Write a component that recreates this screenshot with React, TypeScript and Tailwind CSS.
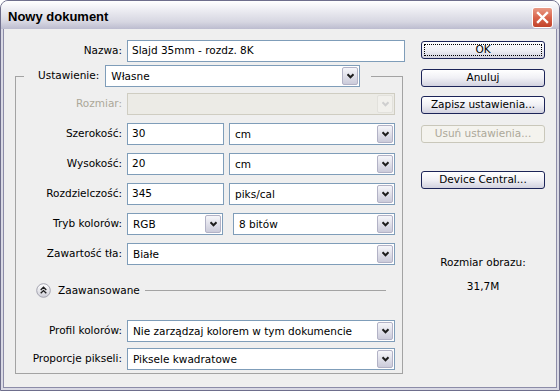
import React from "react";

// small chevron used on every combo box
function Arrow({ disabled }: { disabled?: boolean }) {
    return (
        <span
            className={`m-px w-[16px] shrink-0 rounded-[2px] border flex items-center justify-center ${
                disabled
                    ? "border-[#e2e1dc] bg-[#f1f0ec]"
                    : "border-[#b2b2c6] bg-gradient-to-b from-[#f6f6fa] to-[#cbcbda]"
            }`}
        >
            <svg width="9" height="6" viewBox="0 0 9 6">
                <path
                    d="M1.5 1.3L4.5 4.3L7.5 1.3"
                    fill="none"
                    stroke={disabled ? "#cfcfcf" : "#1e1e1e"}
                    strokeWidth="2"
                />
            </svg>
        </span>
    );
}

function Select({ value, w, disabled }: { value?: string; w: string; disabled?: boolean }) {
    return (
        <div
            className={`flex h-[22px] shrink-0 border ${w} ${
                disabled ? "border-[#cfcdc2] bg-[#ecebe6]" : "border-[#7f9db9] bg-white"
            }`}
        >
            <span className="flex-1 pl-[5px] pt-[1px] flex items-center whitespace-nowrap overflow-hidden">
                {value}
            </span>
            <Arrow disabled={disabled} />
        </div>
    );
}

function Input({ value, w }: { value: string; w: string }) {
    return (
        <div className={`flex h-[22px] shrink-0 items-center border border-[#7f9db9] bg-white pl-[4px] ${w}`}>
            {value}
        </div>
    );
}

function Row({ label, disabled, children }: { label: string; disabled?: boolean; children: React.ReactNode }) {
    return (
        <div className="flex items-center">
            <span className={`w-[111px] shrink-0 pr-[5px] text-right ${disabled ? "text-[#aca899]" : ""}`}>
                {label}
            </span>
            {children}
        </div>
    );
}

function Btn({ label, primary, disabled }: { label: string; primary?: boolean; disabled?: boolean }) {
    if (disabled) {
        return (
            <div className="flex h-[18px] items-center justify-center rounded-[3px] border border-[#c9c7ba] bg-[#f4f3ee] text-[#aca899]">
                {label}
            </div>
        );
    }
    return (
        <div className="flex h-[18px] rounded-[3px] border border-[#1c2458] bg-gradient-to-b from-[#ffffff] via-[#f0f0f5] to-[#d2d2df] p-[2px]">
            <span
                className={`flex flex-1 items-center justify-center ${
                    primary ? "border border-dotted border-black" : ""
                }`}
            >
                {label}
            </span>
        </div>
    );
}

export default function App() {
    return (
        <div className="w-[560px] h-[391px] flex flex-col overflow-hidden rounded-t-[8px] border border-[#6e6e8c] bg-[#d9d9e4] font-['DejaVu_Sans',sans-serif] text-[10.5px] text-black">
            {/* Title bar */}
            <div className="flex h-[28px] shrink-0 items-center justify-between pt-[4px] pl-[7px] pr-[6px] bg-[linear-gradient(to_bottom,#ffffff_0%,#ebebf1_35%,#d6d6e1_75%,#bcbccf_100%)]">
                <span className="font-['Liberation_Sans',sans-serif] text-[13px] font-bold">Nowy dokument</span>
                <div className="flex h-[21px] w-[21px] items-center justify-center rounded-[3px] border border-white bg-gradient-to-b from-[#e89a86] via-[#d9634b] to-[#c1432b]">
                    <svg width="13" height="13" viewBox="0 0 13 13">
                        <path d="M2 2L11 11M11 2L2 11" stroke="white" strokeWidth="2.4" strokeLinecap="square" />
                    </svg>
                </div>
            </div>

            {/* Frame + body */}
            <div className="flex flex-1 px-[2px] pb-[2px]">
                <div className="flex flex-1 border-x border-b border-[#8c8ca8] bg-[#efefef] pl-[11px] pt-[11px]">
                    {/* Left column */}
                    <div className="flex w-[390px] flex-col">
                        <div className="flex items-center">
                            <span className="w-[112px] shrink-0 pr-[5px] text-right">Nazwa:</span>
                            <Input value="Slajd 35mm - rozdz. 8K" w="w-[278px]" />
                        </div>

                        <fieldset className="mt-[3px] w-[388px] border border-[#a3a3a3] pb-[3px]">
                            <legend className="ml-[8px] pl-[14px] pr-[11px]">
                                <div className="flex items-center">
                                    <span>Ustawienie:</span>
                                    <div className="ml-[6px]">
                                        <Select value="Własne" w="w-[255px]" />
                                    </div>
                                </div>
                            </legend>

                            <div className="flex flex-col gap-[8px] pt-[6px]">
                                <Row label="Rozmiar:" disabled>
                                    <Select w="w-[268px]" disabled />
                                </Row>
                                <Row label="Szerokość:">
                                    <Input value="30" w="w-[97px]" />
                                    <div className="ml-[5px]">
                                        <Select value="cm" w="w-[166px]" />
                                    </div>
                                </Row>
                                <Row label="Wysokość:">
                                    <Input value="20" w="w-[97px]" />
                                    <div className="ml-[5px]">
                                        <Select value="cm" w="w-[166px]" />
                                    </div>
                                </Row>
                                <Row label="Rozdzielczość:">
                                    <Input value="345" w="w-[97px]" />
                                    <div className="ml-[5px]">
                                        <Select value="piks/cal" w="w-[166px]" />
                                    </div>
                                </Row>
                                <Row label="Tryb kolorów:">
                                    <Select value="RGB" w="w-[96px]" />
                                    <div className="ml-[10px]">
                                        <Select value="8 bitów" w="w-[162px]" />
                                    </div>
                                </Row>
                                <Row label="Zawartość tła:">
                                    <Select value="Białe" w="w-[268px]" />
                                </Row>
                            </div>

                            {/* Advanced toggle */}
                            <div className="mt-[18px] flex h-[15px] items-center pl-[20px] pr-[16px]">
                                <svg width="15" height="15" viewBox="0 0 15 15">
                                    <defs>
                                        <linearGradient id="adv" x1="0" y1="0" x2="0" y2="1">
                                            <stop offset="0" stopColor="#ffffff" />
                                            <stop offset="1" stopColor="#cfcfd8" />
                                        </linearGradient>
                                    </defs>
                                    <circle cx="7.5" cy="7.5" r="6.8" fill="url(#adv)" stroke="#a4a4b0" />
                                    <path d="M4.7 7L7.5 4.3L10.3 7M4.7 10.3L7.5 7.6L10.3 10.3" fill="none" stroke="#1e1e1e" strokeWidth="1.4" />
                                </svg>
                                <span className="ml-[7px]">Zaawansowane</span>
                                <div className="ml-[5px] h-px flex-1 bg-[#a3a3a3]" />
                            </div>

                            <div className="mt-[22px] flex flex-col gap-[6px]">
                                <Row label="Profil kolorów:">
                                    <Select value="Nie zarządzaj kolorem w tym dokumencie" w="w-[268px]" />
                                </Row>
                                <Row label="Proporcje pikseli:">
                                    <Select value="Piksele kwadratowe" w="w-[268px]" />
                                </Row>
                            </div>
                        </fieldset>
                    </div>

                    {/* Right column */}
                    <div className="ml-[16px] flex w-[124px] flex-col pt-[1px]">
                        <Btn label="OK" primary />
                        <div className="mt-[10px]">
                            <Btn label="Anuluj" />
                        </div>
                        <div className="mt-[9px]">
                            <Btn label="Zapisz ustawienia..." />
                        </div>
                        <div className="mt-[11px]">
                            <Btn label="Usuń ustawienia..." disabled />
                        </div>
                        <div className="mt-[28px]">
                            <Btn label="Device Central..." />
                        </div>
                        <div className="mt-[67px] text-center leading-[13px]">Rozmiar obrazu:</div>
                        <div className="mt-[11px] text-center leading-[13px]">31,7M</div>
                    </div>
                </div>
            </div>
        </div>
    );
}
